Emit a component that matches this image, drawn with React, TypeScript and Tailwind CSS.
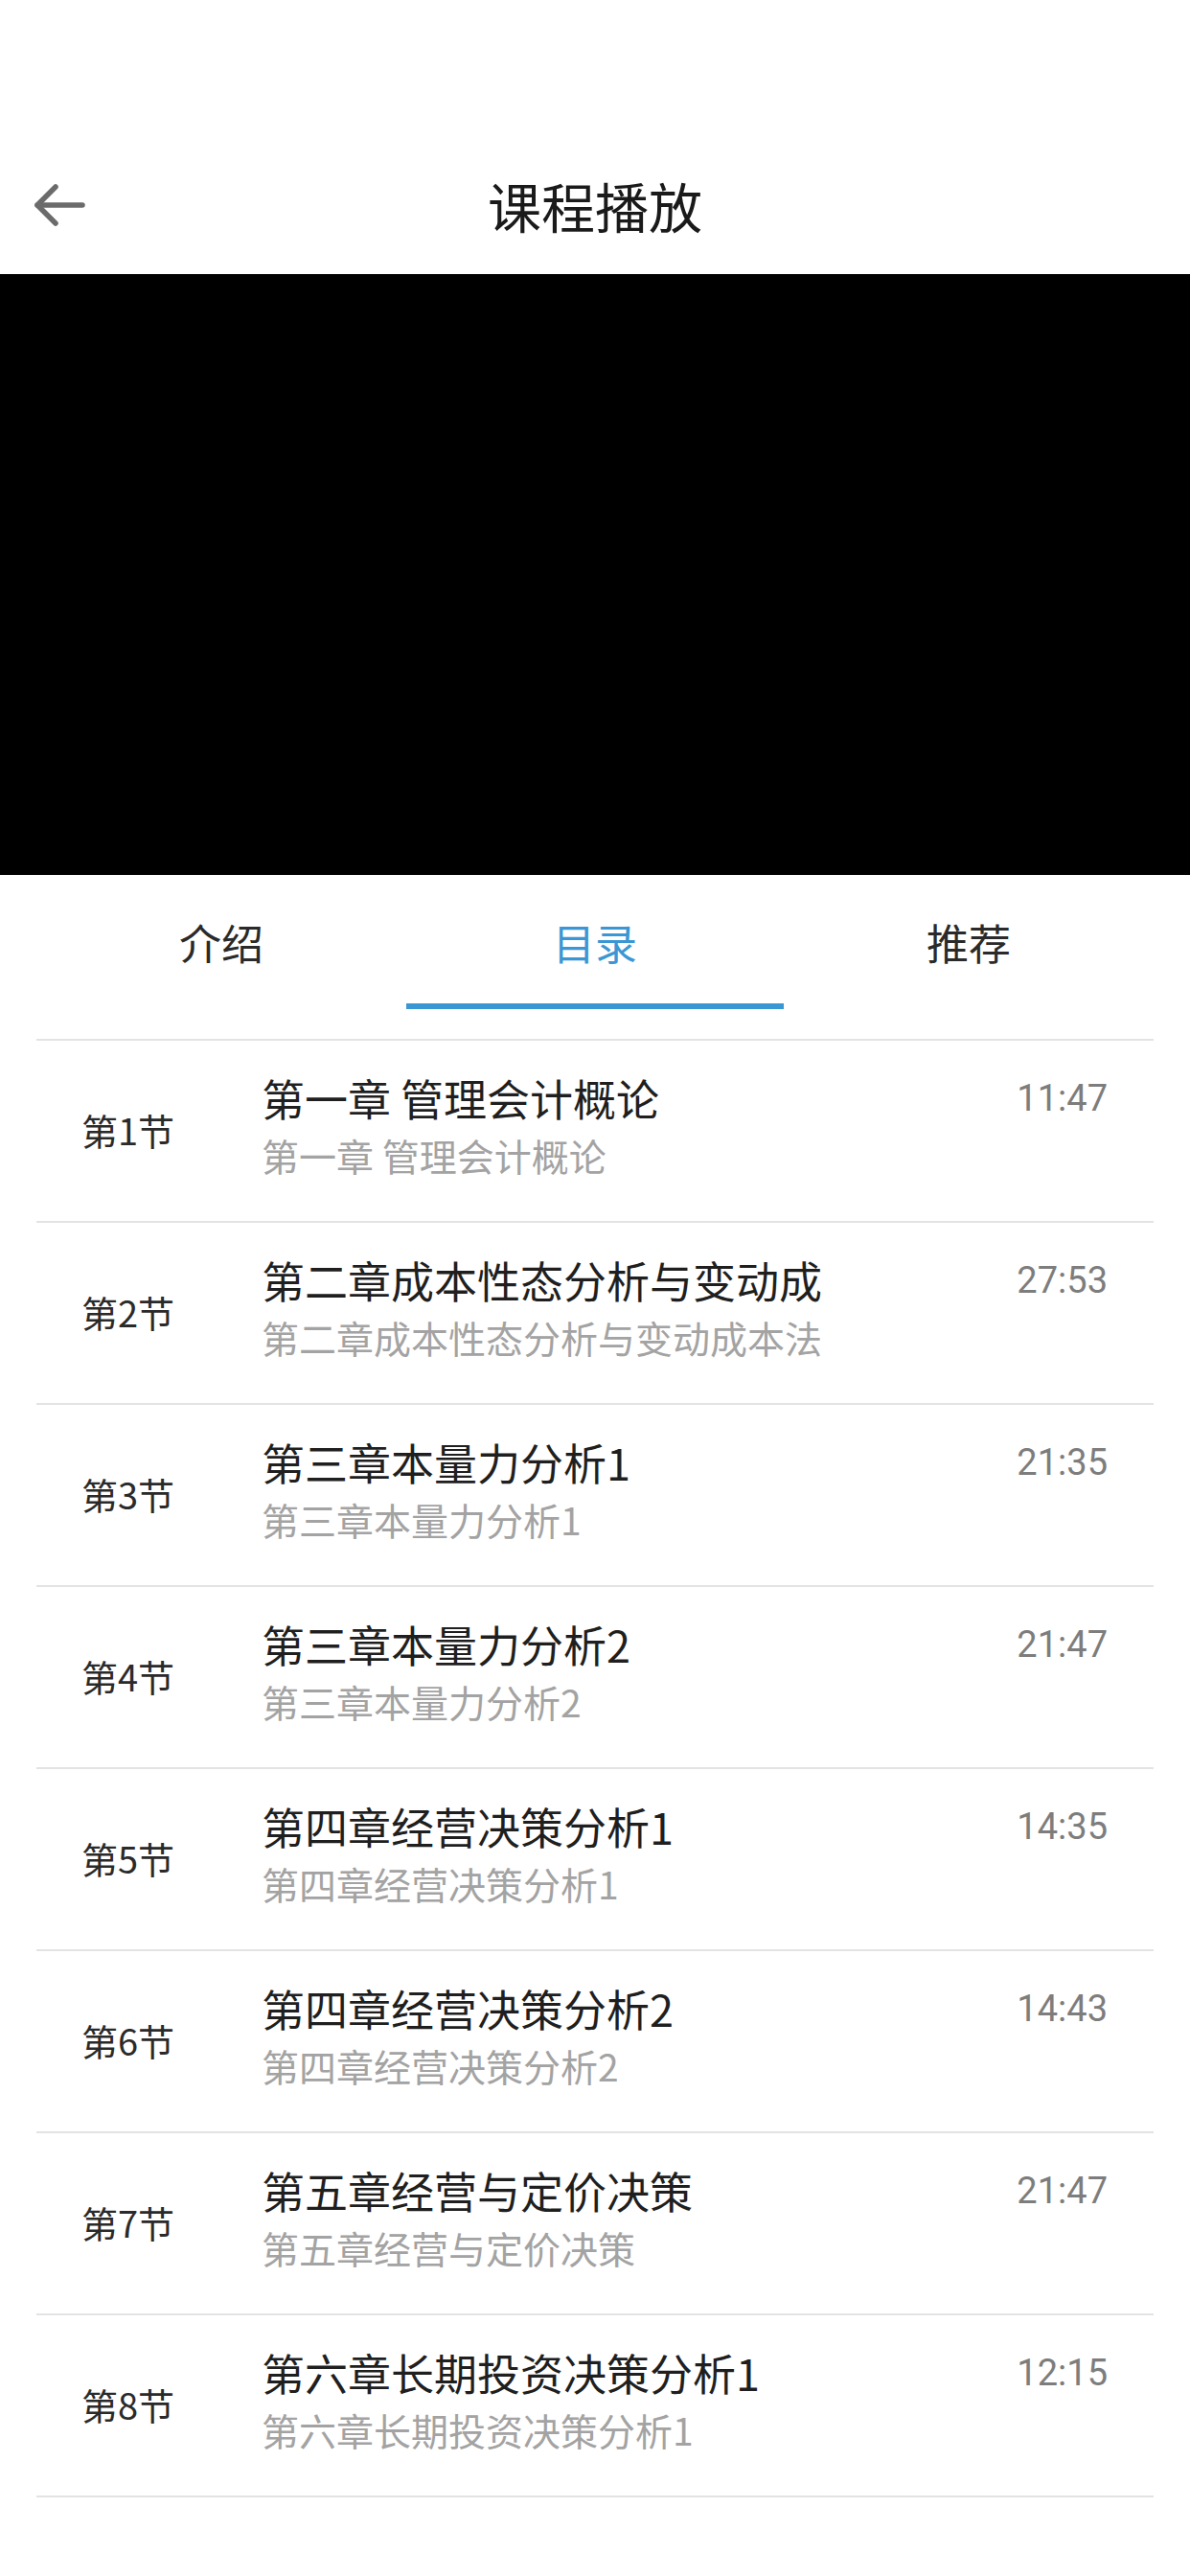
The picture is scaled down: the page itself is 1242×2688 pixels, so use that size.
import React from "react";

const rows = [
  { n: "第1节", t: "第一章 管理会计概论", s: "第一章 管理会计概论", d: "11:47" },
  { n: "第2节", t: "第二章成本性态分析与变动成", s: "第二章成本性态分析与变动成本法", d: "27:53" },
  { n: "第3节", t: "第三章本量力分析1", s: "第三章本量力分析1", d: "21:35" },
  { n: "第4节", t: "第三章本量力分析2", s: "第三章本量力分析2", d: "21:47" },
  { n: "第5节", t: "第四章经营决策分析1", s: "第四章经营决策分析1", d: "14:35" },
  { n: "第6节", t: "第四章经营决策分析2", s: "第四章经营决策分析2", d: "14:43" },
  { n: "第7节", t: "第五章经营与定价决策", s: "第五章经营与定价决策", d: "21:47" },
  { n: "第8节", t: "第六章长期投资决策分析1", s: "第六章长期投资决策分析1", d: "12:15" },
];

export default function App() {
  return (
    <div
      className="w-[1242px] h-[2688px] bg-white overflow-hidden"
      style={{ fontFamily: '"Noto Sans CJK SC", "Noto Sans", sans-serif' }}
    >
      {/* Header */}
      <div className="h-[286px] flex flex-col justify-end">
        <div className="relative h-[144px] flex items-center justify-center">
          <div className="absolute left-[35px] top-1/2 -translate-y-1/2 w-[54px] h-[44px]">
            <svg width="54" height="44" viewBox="0 0 54 44" fill="none">
              <path d="M4 22 H51" stroke="#6b6b6b" strokeWidth="5.5" strokeLinecap="round" />
              <path d="M23 3 L4 22 L23 41" stroke="#6b6b6b" strokeWidth="5.5" strokeLinecap="round" strokeLinejoin="round" />
            </svg>
          </div>
          <div className="text-[56px] leading-none text-[#1a1a1a]">课程播放</div>
        </div>
      </div>

      {/* Video */}
      <div className="h-[627px] bg-black" />

      {/* Tabs */}
      <div className="mx-[36px] grid grid-cols-3 h-[140px]">
        <div className="flex items-center justify-center text-[44px] text-[#2a2a2a]">介绍</div>
        <div className="relative flex items-center justify-center text-[44px] text-[#3b97d3]">
          目录
          <div className="absolute -left-[2px] -right-[2px] bottom-0 h-[6px] bg-[#3b97d3]" />
        </div>
        <div className="flex items-center justify-center text-[44px] text-[#2a2a2a]">推荐</div>
      </div>

      {/* List */}
      <div className="mx-[38px] mt-[31px] border-t-2 border-[#e3e3e3]">
        {rows.map((r) => (
          <div key={r.n} className="h-[190px] border-b-2 border-[#e3e3e3] flex">
            <div className="w-[235px] pl-[47px] flex items-center text-[38px] leading-none text-[#2a2a2a] pb-[2px]">
              {r.n}
            </div>
            <div className="flex-1 pt-[32px] min-w-0">
              <div className="text-[45px] leading-[56px] text-[#1f1f1f] whitespace-nowrap">{r.t}</div>
              <div className="mt-[6px] text-[39px] leading-[50px] text-[#a3a3a3] whitespace-nowrap">{r.s}</div>
            </div>
            <div
              className="pt-[32px] pr-[48px] pl-[20px] text-[38px] leading-[56px] text-[#7d7d7d]"
              style={{ fontFamily: 'Roboto, "Noto Sans", sans-serif' }}
            >
              {r.d}
            </div>
          </div>
        ))}
      </div>
    </div>
  );
}
